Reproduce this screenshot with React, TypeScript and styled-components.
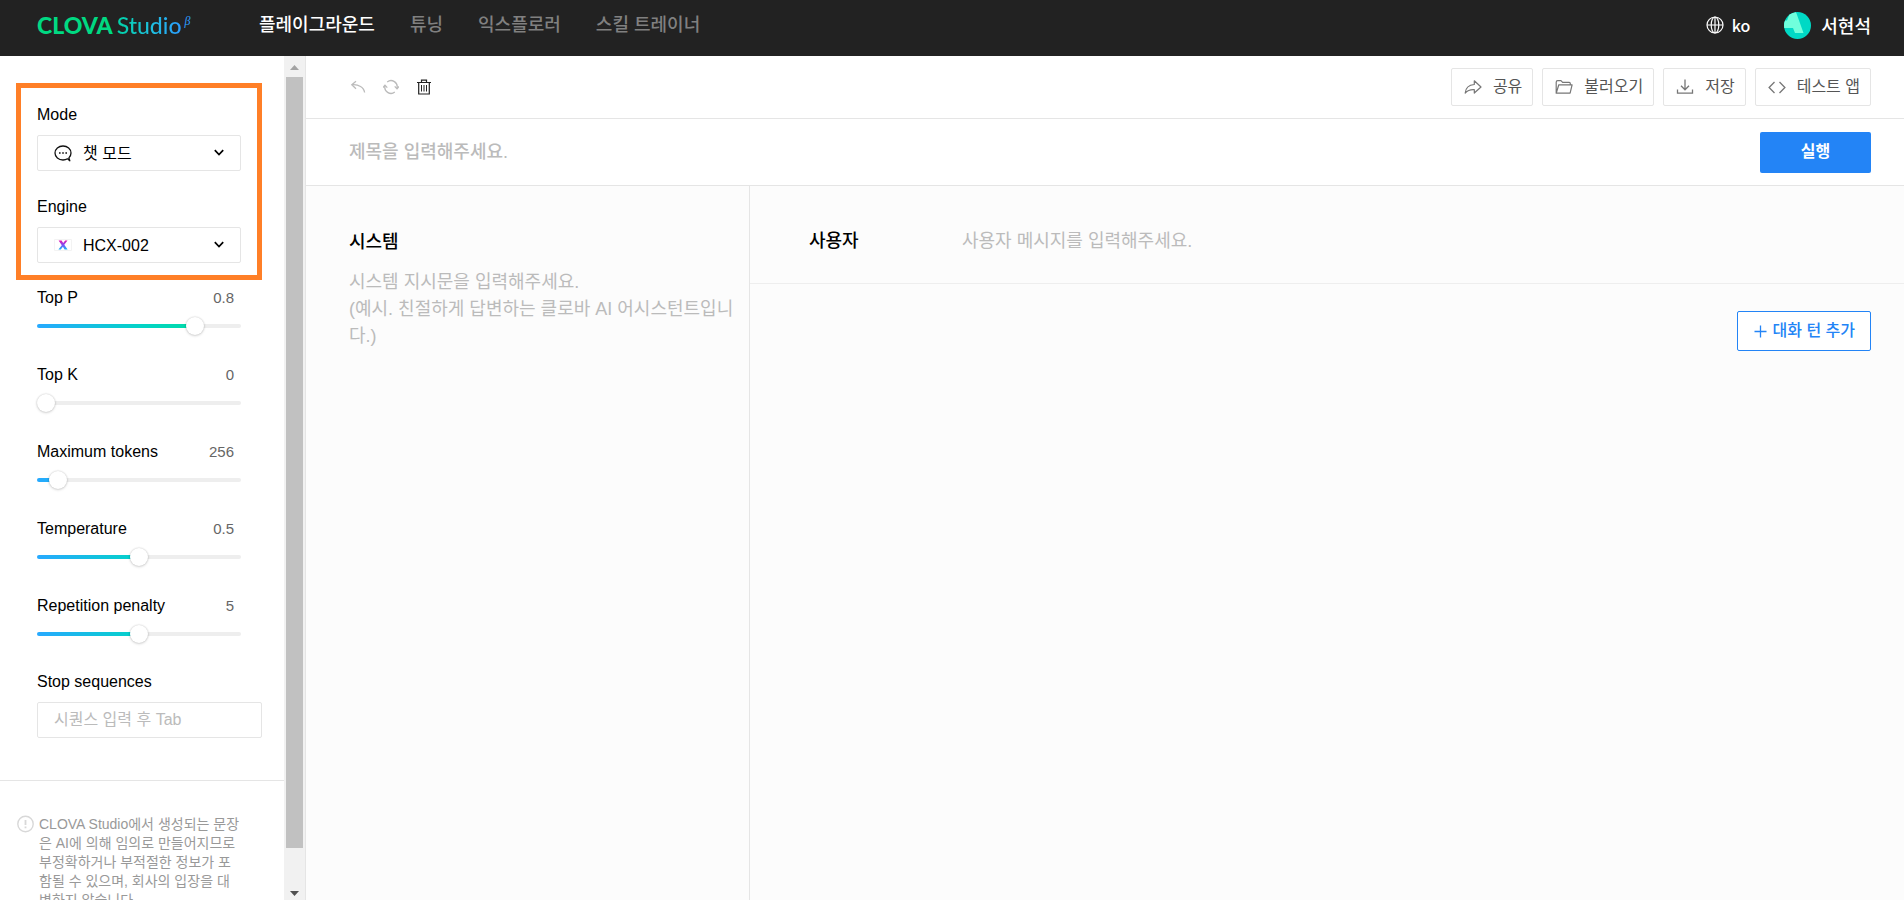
import React, { useState } from 'react';
import styled, { createGlobalStyle, css } from 'styled-components';

const sans = `'Liberation Sans', 'Noto Sans CJK KR', sans-serif`;
const line = '#e5e5e5';

const GlobalStyle = createGlobalStyle`
  *, *::before, *::after { box-sizing: border-box; }
  body { margin: 0; font-family: ${sans}; color: #000; background: #fff; }
  button, input, select, textarea { font-family: inherit; margin: 0; }
  svg { display: block; flex: none; }
`;

const Page = styled.div`
  display: flex;
  flex-direction: column;
  height: 100vh;
  overflow: hidden;
`;

const Header = styled.header`
  display: flex;
  align-items: center;
  flex: none;
  height: 56px;
  padding: 0 33px 6px 37px;
  background: #222;
  color: #fff;
`;

const Logo = styled.a`
  display: flex;
  flex: none;
  width: 222px;
  font: 400 23px/28px Lato, sans-serif;
  text-decoration: none;
  color: #00d982;
`;

const LogoBold = styled.span`
  font-weight: 900;
  margin-right: 4px;
`;

const LogoLight = styled.span`
  font-weight: 500;
  background: linear-gradient(90deg, #00d2a6, #1fbfe0 55%, #2b9dff);
  background-clip: text;
  color: transparent;
`;

const LogoBeta = styled.sup`
  margin-left: 3px;
  font: italic 400 12px/20px 'Liberation Serif', serif;
  color: #2b9dff;
`;

const Nav = styled.nav`
  display: flex;
  gap: 35px;
`;

const NavLink = styled.a<{ $active?: boolean }>`
  font-size: 18px;
  font-weight: 500;
  line-height: 24px;
  text-decoration: none;
  color: ${(p) => (p.$active ? '#fff' : '#808080')};
`;

const Account = styled.div`
  display: flex;
  align-items: center;
  gap: 34px;
  margin-left: auto;
`;

const AccountButton = styled.button<{ $name?: boolean }>`
  display: flex;
  align-items: center;
  gap: ${(p) => (p.$name ? 10 : 8)}px;
  padding: 0;
  border: 0;
  background: none;
  color: #fff;
  font: 500 ${(p) => (p.$name ? 18 : 16)}px/27px 'Noto Sans CJK KR', sans-serif;
`;

const Body = styled.div`
  display: flex;
  flex: 1;
  min-height: 0;
`;

const Sidebar = styled.aside`
  flex: none;
  width: 284px;
  padding-top: 27px;
  overflow: hidden;
`;

const Highlight = styled.section`
  display: flex;
  flex-direction: column;
  gap: 24px;
  margin: 0 22px 0 16px;
  padding: 15px 16px 12px;
  border: 5px solid #ff7f27;
`;

const Field = styled.div`
  display: flex;
  flex-direction: column;
  gap: 8px;
`;

const Label = styled.label`
  font-size: 16px;
  line-height: 24px;
`;

const SelectBox = styled.div`
  display: flex;
  align-items: center;
  height: 36px;
  padding: 0 16px;
  border: 1px solid ${line};
  border-radius: 2px;
`;

const Select = styled.select`
  flex: 1;
  min-width: 0;
  height: 34px;
  padding: 0 0 0 11px;
  border: 0;
  appearance: none;
  background: none;
  color: #000;
  font-size: 16px;
`;

const Params = styled.section`
  display: flex;
  flex-direction: column;
  gap: 28px;
  padding: 6px 43px 27px 37px;
`;

const ParamRow = styled.div`
  display: flex;
  flex-direction: column;
  gap: 7px;
`;

const ParamHead = styled.div`
  display: flex;
  justify-content: space-between;
  padding-right: 7px;
`;

const ParamValue = styled.output`
  font-size: 15px;
  line-height: 24px;
  color: #666;
`;

const thumb = css`
  width: 18px;
  height: 18px;
  border: 0;
  border-radius: 50%;
  background: #fff;
  box-shadow: 0 0 2px rgba(0, 0, 0, 0.2), 0 1px 3px rgba(0, 0, 0, 0.14);
`;

const Slider = styled.input<{ $fill: number }>`
  display: block;
  width: 100%;
  height: 18px;
  appearance: none;
  background: none;

  &::-webkit-slider-runnable-track {
    height: 4px;
    border-radius: 2px;
    background: linear-gradient(90deg, transparent ${(p) => p.$fill}%, #eee ${(p) => p.$fill}%),
      linear-gradient(90deg, #27a9ff, #03d3c8 50%, #00dca4 80%);
  }
  &::-webkit-slider-thumb {
    appearance: none;
    margin-top: -7px;
    ${thumb}
  }
  &::-moz-range-thumb {
    ${thumb}
  }
`;

const StopField = styled(Field)`
  padding: 0 22px 42px 37px;
  border-bottom: 1px solid ${line};
`;

const StopInput = styled.input`
  width: 100%;
  height: 36px;
  padding: 0 16px;
  border: 1px solid ${line};
  border-radius: 2px;
  font-size: 16px;
  &::placeholder { color: #bbb; }
`;

const Notice = styled.footer`
  display: flex;
  gap: 5px;
  padding: 34px 0 0 17px;
  color: #999;
  font-size: 14px;
  line-height: 19px;
  white-space: nowrap;
`;

const NoticeText = styled.p`
  margin: 0;
`;

const Scrollbar = styled.div`
  display: flex;
  flex-direction: column;
  flex: none;
  width: 22px;
  padding: 0 2px;
  border-right: 1px solid ${line};
  background: #f1f1f1;
`;

const ScrollArrow = styled.div<{ $height: number }>`
  display: flex;
  align-items: center;
  justify-content: center;
  height: ${(p) => p.$height}px;
  padding-top: 2px;
`;

const ScrollTrack = styled.div`
  flex: 1;
`;

const ScrollThumb = styled.div`
  height: calc(100% - 36px);
  background: #c1c1c1;
`;

const Main = styled.main`
  display: flex;
  flex-direction: column;
  flex: 1;
  min-width: 0;
`;

const Toolbar = styled.div`
  display: flex;
  align-items: center;
  justify-content: space-between;
  height: 63px;
  padding: 0 33px 0 44px;
  border-bottom: 1px solid ${line};
`;

const ToolGroup = styled.div<{ $gap: number }>`
  display: flex;
  gap: ${(p) => p.$gap}px;
`;

const IconButton = styled.button`
  padding: 0;
  border: 0;
  background: none;
`;

const ToolButton = styled.button`
  display: flex;
  align-items: center;
  gap: 11px;
  height: 38px;
  padding: 0 10px 0 12px;
  border: 1px solid ${line};
  border-radius: 2px;
  background: #fff;
  color: #555;
  font-size: 16px;
  line-height: 20px;
`;

const TitleRow = styled.div`
  display: flex;
  align-items: center;
  height: 67px;
  padding: 0 33px 0 43px;
  border-bottom: 1px solid ${line};
`;

const TitleInput = styled.input`
  flex: 1;
  height: 36px;
  padding: 0;
  border: 0;
  font-size: 18px;
  font-weight: 500;
  &::placeholder { color: #bbb; }
`;

const RunButton = styled.button`
  width: 111px;
  height: 41px;
  padding: 0 0 4px;
  border: 0;
  border-radius: 2px;
  background: #2384f6;
  color: #fff;
  font-size: 16px;
  font-weight: 700;
`;

const Editor = styled.div`
  display: flex;
  flex: 1;
  min-height: 0;
  background: #fcfcfc;
`;

const SystemPanel = styled.section`
  display: flex;
  flex-direction: column;
  flex: none;
  gap: 13px;
  width: 444px;
  padding: 43px 8px 0 43px;
  border-right: 1px solid ${line};
`;

const RoleLabel = styled.label`
  font-size: 18px;
  font-weight: 500;
  line-height: 27px;
`;

const Message = styled.textarea`
  flex: 1;
  min-width: 0;
  padding: 0;
  border: 0;
  resize: none;
  overflow: hidden;
  background: none;
  font-size: 18px;
  line-height: 27px;
  &::placeholder { color: #bbb; }
`;

const ChatPanel = styled.section`
  display: flex;
  flex-direction: column;
  flex: 1;
  min-width: 0;
`;

const Turn = styled.div`
  display: flex;
  height: 98px;
  padding: 42px 33px 0 59px;
  border-bottom: 1px solid #eee;
`;

const TurnRole = styled(RoleLabel)`
  flex: none;
  width: 153px;
`;

const AddButton = styled.button`
  display: flex;
  align-items: center;
  align-self: flex-end;
  gap: 6px;
  height: 40px;
  margin: 27px 33px 0 0;
  padding: 0 15px 0 16px;
  border: 1px solid #2384f6;
  border-radius: 2px;
  background: #fff;
  color: #2384f6;
  font-size: 16px;
  font-weight: 500;
`;

const AddText = styled.span`
  padding-bottom: 4px;
`;

const stroke = (color: string, width = 1) => ({
  fill: 'none',
  stroke: color,
  strokeWidth: width,
  'aria-hidden': true,
});

const Globe = () => (
  <svg width="18" height="18" viewBox="0 0 18 18" {...stroke('#fff', 1.2)}>
    <circle cx="9" cy="9" r="8" />
    <ellipse cx="9" cy="9" rx="3.8" ry="8" />
    <path d="M9 1v16M1 9h16" />
  </svg>
);

const Avatar = () => (
  <svg width="27" height="27" viewBox="0 0 27 27" aria-hidden>
    <defs>
      <clipPath id="avatar"><circle cx="13.5" cy="13.5" r="13.5" /></clipPath>
    </defs>
    <g clipPath="url(#avatar)">
      <path fill="#00d9c5" d="M0 0h27v27H0z" />
      <path fill="#70ffdc" d="M5.500 2 12 0l7.500 21H11l-2-5H0V8.500h3z" />
    </g>
  </svg>
);

const ChatIcon = () => (
  <svg width="18" height="18" viewBox="0 0 18 18" {...stroke('#111', 1.3)}>
    <path d="M13.500 14.800C12.200 15.600 10.700 16 9 16 4.600 16 1 13 1 9s3.600-7 8-7 8 3 8 7c0 1.900-.8 3.600-2.100 4.900l.9 2.900z" strokeLinejoin="round" />
    <path d="M5 9h1.600M8.200 9h1.600M11.400 9H13" strokeWidth="1.6" />
  </svg>
);

const EngineIcon = () => (
  <svg width="18" height="12" viewBox="0 0 18 12" aria-hidden>
    <defs>
      <linearGradient id="engine" x1="0" y1="0" x2="0" y2="1">
        <stop offset="0" stopColor="#e815b0" />
        <stop offset=".5" stopColor="#7b52f5" />
        <stop offset="1" stopColor="#18b8f8" />
      </linearGradient>
    </defs>
    <path d="M.5.5h17v11H.5z" fill="#fff" stroke="#f3f3f3" />
    <path fill="url(#engine)" d="M4.600 1.500h3L9.200 4l2-2.500h2.300L10.300 5.700l3.300 4.900h-3L8.900 7.800l-2.100 2.800H4.400L7.800 6.200z" />
  </svg>
);

const Chevron = () => (
  <svg width="10" height="8" viewBox="0 0 10 8" {...stroke('#000', 1.7)}>
    <path d="M.8 1.200 5 5.600l4.200-4.400" />
  </svg>
);

const NoticeIcon = () => (
  <svg width="17" height="19" viewBox="0 0 17 19" {...stroke('#d8d8d8', 1.4)}>
    <circle cx="8.500" cy="9" r="7.700" />
    <path d="M8.500 5v5M8.500 11.500v1.800" strokeWidth="1.8" />
  </svg>
);

const UndoIcon = () => (
  <svg width="16" height="16" viewBox="0 0 16 16" {...stroke('#bbb', 1.3)}>
    <path d="M6 2.200 1.800 5.800 6 9.700M2 5.800c6.500-.6 12 2.400 12.600 7.700" />
  </svg>
);

const RefreshIcon = () => (
  <svg width="16" height="16" viewBox="0 0 16 16" {...stroke('#bbb', 1.3)}>
    <path d="M4.200 2.900A6.200 6.200 0 0 1 14 9.300M11.800 13.100A6.200 6.200 0 0 1 2 6.700" />
    <path d="M11.700 7.400 14 9.700l2-2.300M0 8.600l2-2.300 2.300 2.300" />
  </svg>
);

const TrashIcon = () => (
  <svg width="16" height="16" viewBox="0 0 16 16" {...stroke('#222', 1.2)}>
    <path d="M1 3.500h14M5.500 3V1.200h5V3M2.700 4v11h10.600V4" />
    <path d="M5.500 6v6.500M8 6v6.500M10.500 6v6.500" strokeWidth="1" />
  </svg>
);

const ShareIcon = () => (
  <svg width="18" height="16" viewBox="0 0 18 16" {...stroke('#777', 1.2)}>
    <path d="M10.300 1.800 17 8l-6.700 6v-3.300C6.200 10.400 3.500 11.500 1.200 14c.4-5 3.600-8 9.100-8.500z" strokeLinejoin="round" />
  </svg>
);

const FolderIcon = () => (
  <svg width="18" height="16" viewBox="0 0 18 16" {...stroke('#777', 1.2)}>
    <path d="M1.200 14.200V3.300q0-1.600 1.500-1.600H6l1.600 1.700h6.600q1.100 0 1.100 1.200v1.200M1.200 14.200l2.600-8.400h13.300l-2 8.400z" strokeLinejoin="round" />
  </svg>
);

const SaveIcon = () => (
  <svg width="18" height="16" viewBox="0 0 18 16" {...stroke('#777', 1.3)}>
    <path d="M9 .500v10M5 6.800l4 4 4-4M1.500 10.500v3.700h15v-3.700" />
  </svg>
);

const CodeIcon = () => (
  <svg width="18" height="16" viewBox="0 0 18 16" {...stroke('#777', 1.3)}>
    <path d="M6.500 3 1.100 8.500 6.500 14M11.500 3l5.400 5.500L11.500 14" />
  </svg>
);

const PlusIcon = () => (
  <svg width="13" height="13" viewBox="0 0 13 13" {...stroke('#2384f6', 1.3)}>
    <path d="M6.500.5v12M.5 6.500h12" />
  </svg>
);

const params = [
  { id: 'top-p', label: 'Top P', value: 0.8, max: 1, step: 0.1 },
  { id: 'top-k', label: 'Top K', value: 0, max: 128, step: 1 },
  { id: 'max-tokens', label: 'Maximum tokens', value: 256, max: 4096, step: 1 },
  { id: 'temperature', label: 'Temperature', value: 0.5, max: 1, step: 0.1 },
  { id: 'penalty', label: 'Repetition penalty', value: 5, max: 10, step: 1 },
];

function Param({ id, label, value, max, step }: (typeof params)[number]) {
  const [current, setCurrent] = useState(value);
  return (
    <ParamRow>
      <ParamHead>
        <Label htmlFor={id}>{label}</Label>
        <ParamValue htmlFor={id}>{current}</ParamValue>
      </ParamHead>
      <Slider
        id={id}
        type="range"
        min={0}
        max={max}
        step={step}
        value={current}
        $fill={(current / max) * 100}
        onChange={(e) => setCurrent(Number(e.target.value))}
      />
    </ParamRow>
  );
}

export default function App() {
  return (
    <Page>
      <GlobalStyle />
      <Header>
        <Logo href="#">
          <LogoBold>CLOVA</LogoBold>
          <LogoLight>Studio</LogoLight>
          <LogoBeta>β</LogoBeta>
        </Logo>
        <Nav>
          <NavLink href="#" $active>플레이그라운드</NavLink>
          <NavLink href="#">튜닝</NavLink>
          <NavLink href="#">익스플로러</NavLink>
          <NavLink href="#">스킬 트레이너</NavLink>
        </Nav>
        <Account>
          <AccountButton><Globe />ko</AccountButton>
          <AccountButton $name><Avatar />서현석</AccountButton>
        </Account>
      </Header>

      <Body>
        <Sidebar>
          <Highlight>
            <Field>
              <Label htmlFor="mode">Mode</Label>
              <SelectBox>
                <ChatIcon />
                <Select id="mode"><option>챗 모드</option></Select>
                <Chevron />
              </SelectBox>
            </Field>
            <Field>
              <Label htmlFor="engine">Engine</Label>
              <SelectBox>
                <EngineIcon />
                <Select id="engine"><option>HCX-002</option></Select>
                <Chevron />
              </SelectBox>
            </Field>
          </Highlight>
          <Params>
            {params.map((p) => <Param key={p.id} {...p} />)}
          </Params>
          <StopField>
            <Label htmlFor="stop">Stop sequences</Label>
            <StopInput id="stop" placeholder="시퀀스 입력 후 Tab" />
          </StopField>
          <Notice>
            <NoticeIcon />
            <NoticeText>
              CLOVA Studio에서 생성되는 문장<br />
              은 AI에 의해 임의로 만들어지므로<br />
              부정확하거나 부적절한 정보가 포<br />
              함될 수 있으며, 회사의 입장을 대<br />
              변하지 않습니다.
            </NoticeText>
          </Notice>
        </Sidebar>
        <Scrollbar aria-hidden>
          <ScrollArrow $height={21}>
            <svg width="9" height="5" viewBox="0 0 9 5"><path d="M0 5 4.500 0 9 5z" fill="#a3a3a3" /></svg>
          </ScrollArrow>
          <ScrollTrack><ScrollThumb /></ScrollTrack>
          <ScrollArrow $height={16}>
            <svg width="9" height="5" viewBox="0 0 9 5"><path d="M0 0 4.500 5 9 0z" fill="#505050" /></svg>
          </ScrollArrow>
        </Scrollbar>

        <Main>
          <Toolbar>
            <ToolGroup $gap={17}>
              <IconButton aria-label="실행 취소"><UndoIcon /></IconButton>
              <IconButton aria-label="새로고침"><RefreshIcon /></IconButton>
              <IconButton aria-label="삭제"><TrashIcon /></IconButton>
            </ToolGroup>
            <ToolGroup $gap={9}>
              <ToolButton><ShareIcon />공유</ToolButton>
              <ToolButton><FolderIcon />불러오기</ToolButton>
              <ToolButton><SaveIcon />저장</ToolButton>
              <ToolButton><CodeIcon />테스트 앱</ToolButton>
            </ToolGroup>
          </Toolbar>
          <TitleRow>
            <TitleInput aria-label="제목" placeholder="제목을 입력해주세요." />
            <RunButton>실행</RunButton>
          </TitleRow>
          <Editor>
            <SystemPanel>
              <RoleLabel htmlFor="system">시스템</RoleLabel>
              <Message
                id="system"
                placeholder={'시스템 지시문을 입력해주세요.\n(예시. 친절하게 답변하는 클로바 AI 어시스턴트입니다.)'}
              />
            </SystemPanel>
            <ChatPanel>
              <Turn>
                <TurnRole htmlFor="user">사용자</TurnRole>
                <Message id="user" placeholder="사용자 메시지를 입력해주세요." />
              </Turn>
              <AddButton><PlusIcon /><AddText>대화 턴 추가</AddText></AddButton>
            </ChatPanel>
          </Editor>
        </Main>
      </Body>
    </Page>
  );
}
